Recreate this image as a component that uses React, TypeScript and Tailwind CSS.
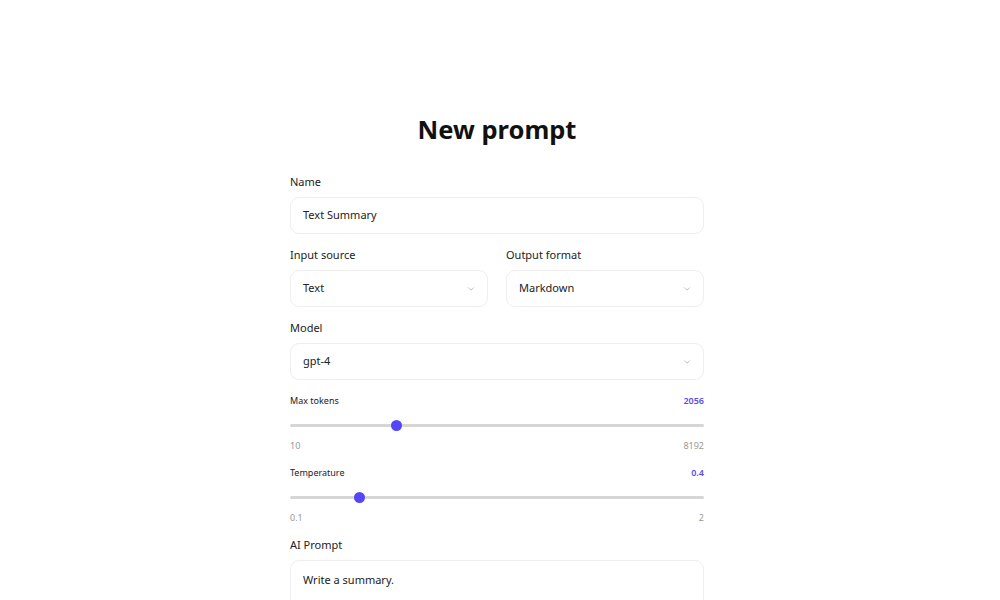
import { ChevronDown } from "lucide-react";

const font = { fontFamily: '"Noto Sans", "Open Sans", sans-serif' };

function Field({ label, children }: { label: string; children: React.ReactNode }) {
  return (
    <div className="flex flex-col">
      <label className="text-[11px] leading-[14px] text-[#222] mb-[8px]">{label}</label>
      {children}
    </div>
  );
}

function SelectBox({ value }: { value: string }) {
  return (
    <div className="h-[37px] flex items-center justify-between rounded-[9px] border border-[#eeeeee] bg-white pl-[12px] pr-[11px]">
      <span className="text-[11px] text-[#222]">{value}</span>
      <ChevronDown className="w-[10px] h-[10px] text-[#9a9a9a]" strokeWidth={1.5} />
    </div>
  );
}

function Slider({
  label,
  value,
  min,
  max,
}: {
  label: string;
  value: number;
  min: number;
  max: number;
}) {
  const frac = (value - min) / (max - min);
  return (
    <div className="flex flex-col">
      <div className="flex items-center justify-between text-[9px] leading-[12px]">
        <span className="text-[#222]">{label}</span>
        <span className="font-semibold text-[#5b4cf0]">{value}</span>
      </div>
      <div className="relative h-[14px] mt-[11px] flex items-center">
        <div className="h-[3px] w-full rounded-full bg-[#d6d6d6]" />
        <div
          className="absolute top-[2px] w-[11px] h-[11px] rounded-full bg-[#5546f5]"
          style={{ left: `calc(${frac} * (100% - 11px))` }}
        />
      </div>
      <div className="flex items-center justify-between text-[9px] leading-[12px] text-[#999] mt-[8px]">
        <span>{min}</span>
        <span>{max}</span>
      </div>
    </div>
  );
}

export default function App() {
  return (
    <div className="w-[1000px] h-[600px] overflow-hidden bg-white" style={font}>
      <div className="w-[414px] ml-[290px] pt-[112px]">
        <h1 className="text-center text-[25.5px] leading-[34px] font-bold text-[#111] mb-[29px]">
          New prompt
        </h1>

        <div className="flex flex-col gap-[14px]">
          <Field label="Name">
            <div className="h-[37px] flex items-center rounded-[9px] border border-[#eeeeee] bg-white px-[12px]">
              <span className="text-[11px] text-[#222]">Text Summary</span>
            </div>
          </Field>

          <div className="grid grid-cols-2 gap-[18px]">
            <Field label="Input source">
              <SelectBox value="Text" />
            </Field>
            <Field label="Output format">
              <SelectBox value="Markdown" />
            </Field>
          </div>

          <Field label="Model">
            <SelectBox value="gpt-4" />
          </Field>
        </div>

        <div className="mt-[15px] flex flex-col gap-[15px]">
          <Slider label="Max tokens" value={2056} min={10} max={8192} />
          <Slider label="Temperature" value={0.4} min={0.1} max={2} />
        </div>

        <div className="mt-[14px]">
          <Field label="AI Prompt">
            <div className="h-[90px] rounded-[9px] border border-[#eeeeee] bg-white px-[12px] pt-[11px] text-[11px] leading-[16px] text-[#222]">
              Write a summary.
            </div>
          </Field>
        </div>
      </div>
    </div>
  );
}
